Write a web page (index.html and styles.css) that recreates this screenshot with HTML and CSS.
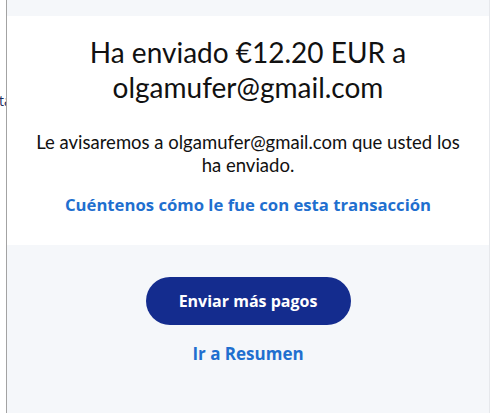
FILE: index.html
```html
<!DOCTYPE html>
<html lang="es">
<head>
    <meta charset="UTF-8">
    <meta name="viewport" content="width=device-width, initial-scale=1.0">
    <title>Pago enviado</title>
    <link rel="stylesheet" href="styles.css">
</head>
<body>
    <div class="page">
        <!-- Clipped side column from the previous view -->
        <div class="side">
            <span class="side-text">ta</span>
        </div>

        <div class="main">
            <div class="card">
                <h1 class="title">Ha enviado €12.20 EUR a olgamufer@gmail.com</h1>
                <p class="notice">Le avisaremos a olgamufer@gmail.com que usted los ha enviado.</p>
                <a class="link feedback" href="#">Cuéntenos cómo le fue con esta transacción</a>
            </div>

            <div class="actions">
                <button class="primary">Enviar más pagos</button>
                <a class="link summary" href="#">Ir a Resumen</a>
            </div>
        </div>

        <div class="edge"></div>
    </div>
</body>
</html>
```

FILE: styles.css
```css
body {
    margin: 0;
    padding: 0;
    background-color: #fff;
    font-family: Lato, "Open Sans", sans-serif;
    color: #1a1a1a;
}

.page {
    display: flex;
    height: 413px;
    overflow: hidden;
}

/* Narrow column on the left, mostly cut off */
.side {
    width: 6px;
    border-right: 1px solid #a3a3a3;
    overflow: hidden;
    position: relative;
}

.side-text {
    position: absolute;
    top: 91px;
    left: -1px;
    font-family: "Open Sans", sans-serif;
    font-size: 14px;
    color: #1b2b5e;
    white-space: nowrap;
}

.main {
    flex: 1;
    background-color: #f5f7fa;
    padding-top: 16px;
    display: flex;
    flex-direction: column;
}

.edge {
    width: 2px;
    border-left: 1px solid #e6e8ec;
}

.card {
    background-color: #fff;
    padding: 19px 20px 29px;
    display: flex;
    flex-direction: column;
    align-items: center;
    text-align: center;
}

.title {
    font-size: 28px;
    font-weight: 400;
    line-height: 35px;
    margin: 0;
    max-width: 360px;
    color: #111;
}

.notice {
    font-size: 18.5px;
    line-height: 23px;
    margin: 26px 0 0;
    max-width: 435px;
    color: #111;
}

.link {
    font-family: "Open Sans", sans-serif;
    font-weight: 700;
    font-size: 17px;
    line-height: 22px;
    color: #1f6fcf;
    text-decoration: none;
}

.feedback {
    font-size: 16.7px;
    margin-top: 17px;
}

.actions {
    display: flex;
    flex-direction: column;
    align-items: center;
    padding-top: 32px;
}

.primary {
    width: 205px;
    height: 48px;
    border: none;
    border-radius: 24px;
    background-color: #142c8e;
    color: #fff;
    font-family: "Open Sans", sans-serif;
    font-weight: 700;
    font-size: 16px;
    cursor: pointer;
}

.summary {
    margin-top: 18px;
}
```
